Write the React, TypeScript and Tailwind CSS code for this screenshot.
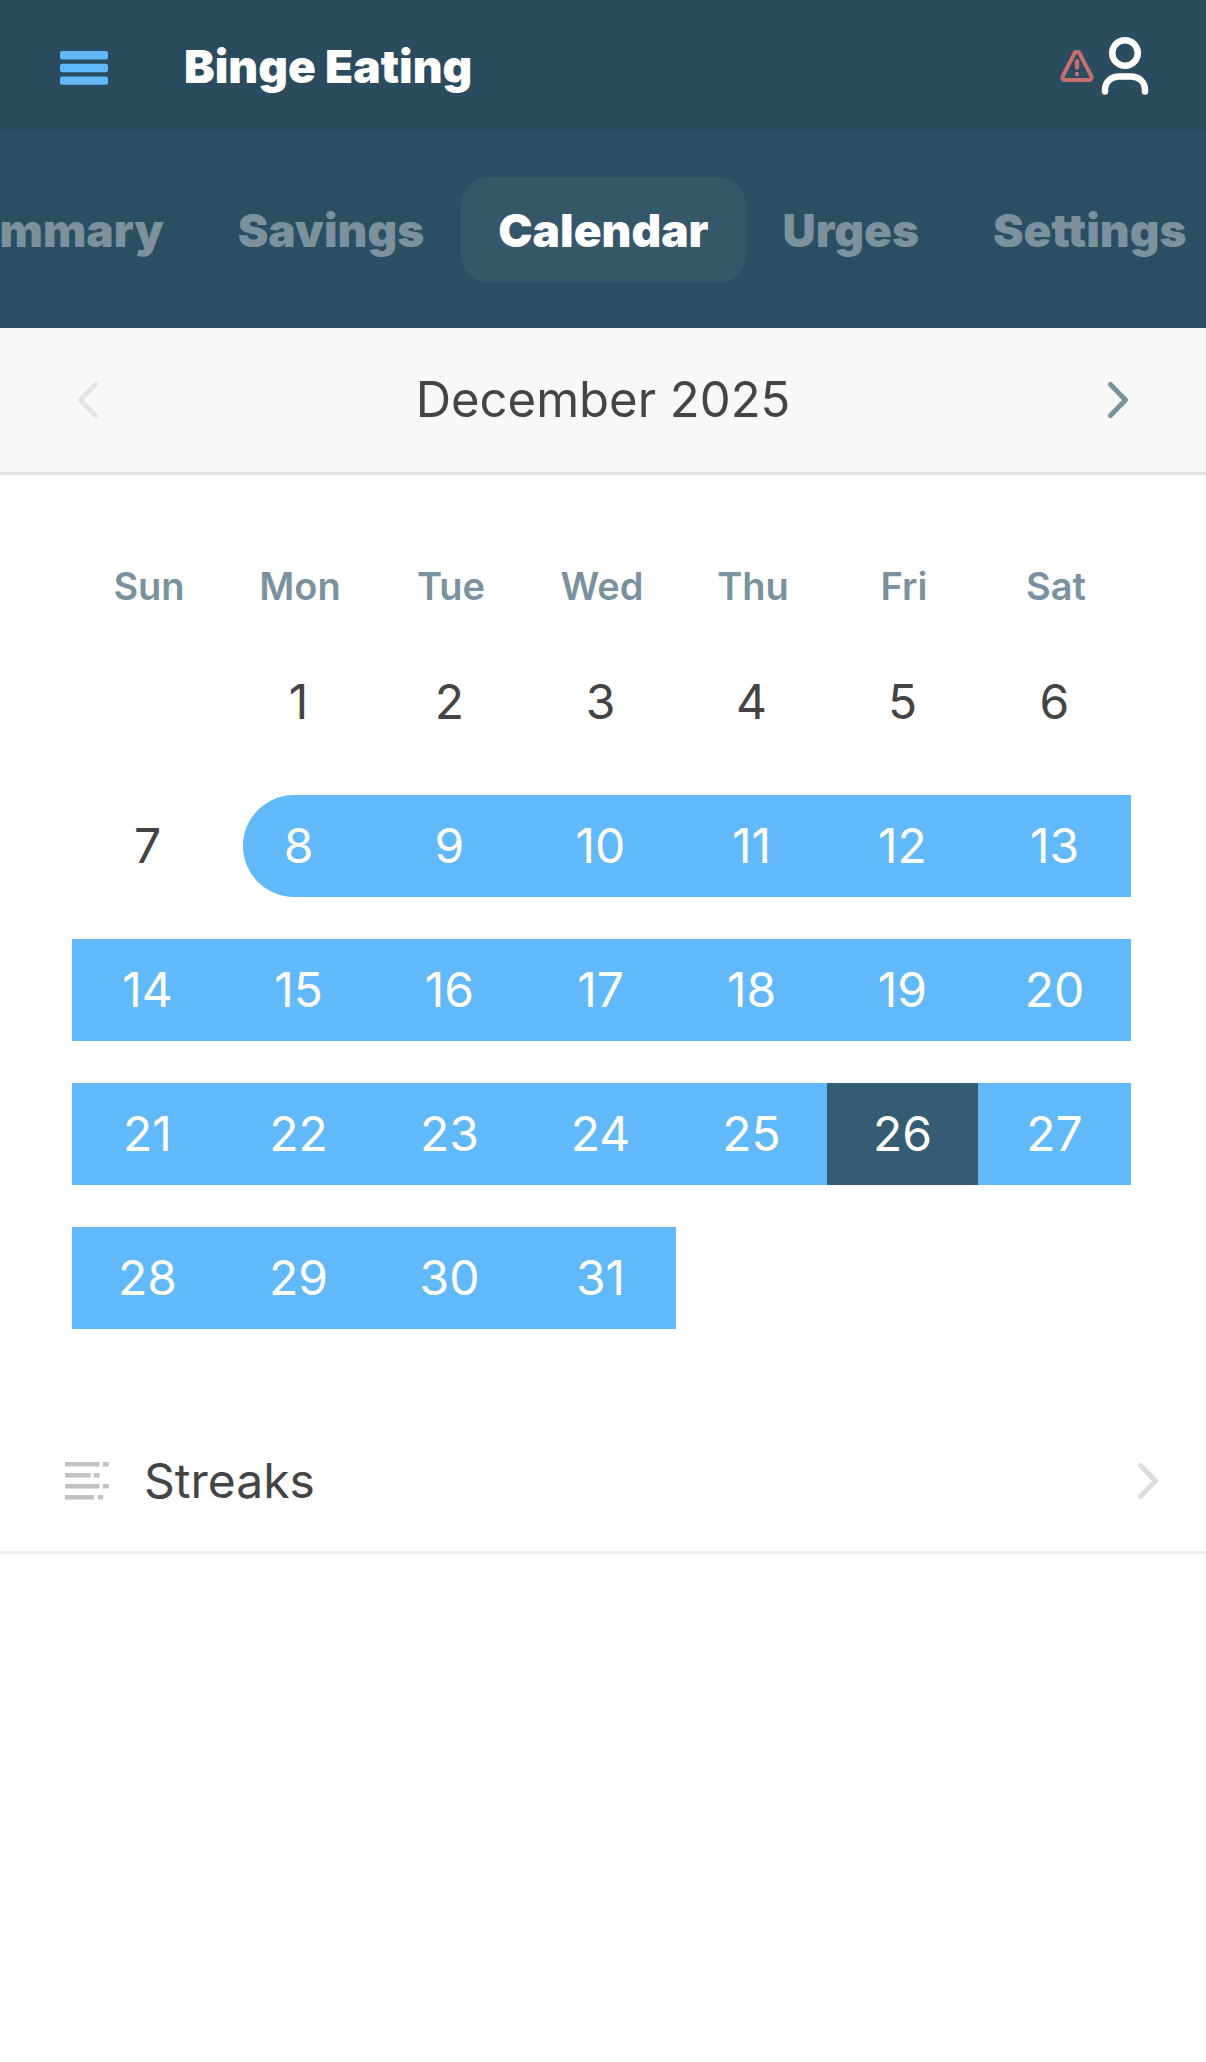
import { useLayoutEffect, useRef } from "react";

const tabs = ["Summary", "Savings", "Calendar", "Urges", "Settings"];
const weekdays = ["Sun", "Mon", "Tue", "Wed", "Thu", "Fri", "Sat"];
const firstWeekday = 1;
const daysInMonth = 31;
const streakStart = 8;
const today = 26;

const weeks: (number | null)[][] = [0, 1, 2, 3, 4].map((week) =>
  weekdays.map((_, i) => {
    const day = week * 7 + i - firstWeekday + 1;
    return day >= 1 && day <= daysInMonth ? day : null;
  }),
);

function Chevron({ direction, className }: { direction: "left" | "right"; className: string }) {
  return (
    <svg viewBox="0 0 22 38" fill="none" stroke="currentColor" strokeWidth="5" strokeLinecap="round" strokeLinejoin="round" className={`h-[38px] w-[22px] ${className}`} aria-hidden="true">
      <path d={direction === "left" ? "M18.500 3.500 3.500 19l15 15.500" : "M3.500 3.500 18.500 19l-15 15.500"} />
    </svg>
  );
}

function AppBar() {
  return (
    <header className="flex h-[131px] items-center bg-[#2b4b5e] pr-[57px] pl-[60px]">
      <button aria-label="Menu" className="text-[#61b9f9]">
        <svg viewBox="0 0 48 34" fill="currentColor" className="mt-1 h-[34px] w-12" aria-hidden="true">
          <rect width="48" height="8.400" rx="2.500" />
          <rect y="12.800" width="48" height="8.400" rx="2.500" />
          <rect y="25.400" width="48" height="8.400" rx="2.500" />
        </svg>
      </button>
      <h1 className="ml-[76px] flex-1 text-[46px] leading-[56px] font-black text-white">Binge Eating</h1>
      <button aria-label="Account, needs attention" className="flex items-center gap-[7px]">
        <svg viewBox="0 0 34 34" fill="none" stroke="#c66f6f" strokeWidth="4" strokeLinecap="round" strokeLinejoin="round" className="size-[34px]" aria-hidden="true">
          <path d="M14.600 4.100a2.800 2.800 0 0 1 4.800 0L31.200 27a2.600 2.600 0 0 1-2.300 4H5.100a2.600 2.600 0 0 1-2.300-4Z" />
          <path d="M17 12.500v6" strokeWidth="4.400" />
          <circle cx="17" cy="25" r="2.200" fill="#c66f6f" stroke="none" />
        </svg>
        <svg viewBox="0 0 48 58" fill="none" stroke="#ffffff" strokeWidth="6.500" strokeLinecap="round" className="h-[58px] w-12" aria-hidden="true">
          <circle cx="24" cy="16" r="12.800" />
          <path d="M4 54.500v-1.500C4 45 10 39.500 18 39.500h12c8 0 14 5.500 14 13.500v1.500" />
        </svg>
      </button>
    </header>
  );
}

function TabBar() {
  const bar = useRef<HTMLElement>(null);
  const active = useRef<HTMLAnchorElement>(null);

  // Keeps the active tab in the middle of the scrolling strip.
  useLayoutEffect(() => {
    const center = () => {
      if (!bar.current || !active.current) return;
      bar.current.scrollLeft = active.current.offsetLeft - (bar.current.clientWidth - active.current.offsetWidth) / 2;
    };
    center();
    window.addEventListener("resize", center);
    return () => window.removeEventListener("resize", center);
  }, []);

  return (
    <nav ref={bar} aria-label="Sections" className="relative flex overflow-x-auto bg-[#2b4e62] px-10 pt-[46px] pb-[45px] [scrollbar-width:none]">
      {tabs.map((tab) => {
        const selected = tab === "Calendar";
        return (
          <a
            key={tab}
            ref={selected ? active : undefined}
            href={`#${tab.toLowerCase()}`}
            aria-current={selected ? "page" : undefined}
            className={`shrink-0 rounded-[28px] px-[37px] py-[25px] text-[46px] leading-[56px] font-black ${selected ? "bg-[#36566a] text-white" : "text-[#7c919e]"}`}
          >
            {tab}
          </a>
        );
      })}
    </nav>
  );
}

function MonthBar() {
  return (
    <div className="flex h-[147px] items-center justify-between border-b-[3px] border-[#e2e2e2] bg-[#f8f8f8] px-[77px]">
      <button aria-label="Previous month" disabled>
        <Chevron direction="left" className="text-[#e3e3e3]" />
      </button>
      <h2 className="text-[49px] leading-[60px] text-[#444444]">December 2025</h2>
      <button aria-label="Next month">
        <Chevron direction="right" className="text-[#7c919e]" />
      </button>
    </div>
  );
}

function dayStyle(day: number) {
  if (day === today) return "w-full bg-[#365c73] text-white";
  if (day === streakStart) return "ml-5 w-[calc(100%-20px)] rounded-l-full bg-[#61b9f9] pr-5 text-white";
  if (day > streakStart) return "w-full bg-[#61b9f9] text-white";
  return "w-full text-[#444444]";
}

function MonthTable() {
  return (
    <div className="pt-[87px] pr-[75px] pl-[72px]">
      <table className="w-full table-fixed border-collapse">
        <colgroup>
          <col span={6} className="w-[14.26%]" />
          <col />
        </colgroup>
        <thead>
          <tr>
            {weekdays.map((name) => (
              <th key={name} scope="col" className="pb-5 pl-[3px] text-[38px] leading-[48px] font-semibold text-[#7c919e]">
                {name}
              </th>
            ))}
          </tr>
        </thead>
        <tbody>
          {weeks.map((week, row) => (
            <tr key={row}>
              {week.map((day, i) => (
                <td key={i} className="px-0 py-[21px]">
                  {day !== null && (
                    <button className={`flex h-[102px] items-center justify-center text-[48px] leading-[60px] ${dayStyle(day)}`}>
                      {day}
                    </button>
                  )}
                </td>
              ))}
            </tr>
          ))}
        </tbody>
      </table>
    </div>
  );
}

function StreaksRow() {
  return (
    <a href="#streaks" className="mt-[60px] flex h-36 items-center border-b-[3px] border-[#f0f0f0] pr-[47px] pl-[65px]">
      <svg viewBox="0 0 44 38" fill="#c1c1c1" className="h-[38px] w-11" aria-hidden="true">
        <path d="M0 0h34.500v4.500H0zM38 0h5.800v4.500H38zM0 11h25.500v4.500H0zM29 11h5.500v4.500H29zM0 22h34.500v4.500H0zM38 22h5.800v4.500H38zM0 33h29v4.500H0zM33 33h5.200v4.500H33z" />
      </svg>
      <span className="ml-[35px] flex-1 text-[48px] leading-[60px] text-[#444444]">Streaks</span>
      <Chevron direction="right" className="text-[#dddddd]" />
    </a>
  );
}

export default function App() {
  return (
    <div className="min-h-screen bg-white font-[Inter,sans-serif]">
      <AppBar />
      <TabBar />
      <main>
        <MonthBar />
        <MonthTable />
        <StreaksRow />
      </main>
    </div>
  );
}
